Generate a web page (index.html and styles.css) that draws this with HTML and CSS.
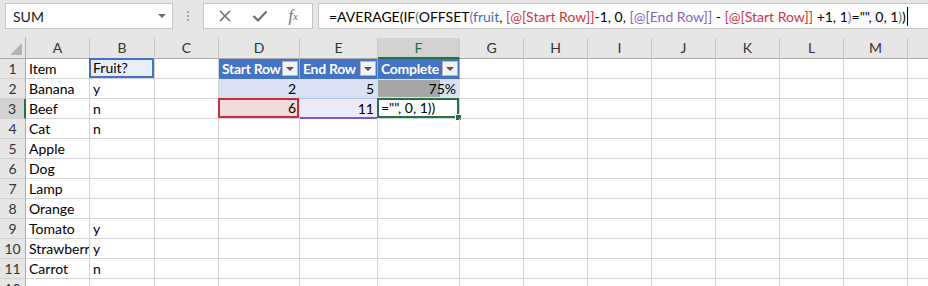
FILE: index.html
```html
<!DOCTYPE html>
<html lang="en">
  <head>
    <meta charset="UTF-8" />
    <title>Sheet</title>
    <link rel="stylesheet" href="styles.css">
  </head>
  <body>
    <div class="topbar">
      <div class="name-box">
        <span>SUM</span>
        <span class="caret"></span>
      </div>
      <div class="grip"><i></i><i></i><i></i></div>
      <div class="fx-box">
        <svg width="14" height="14" viewBox="0 0 14 14"><path d="M2 2 L12 12 M12 2 L2 12" stroke="#6e6e6e" stroke-width="1.6" fill="none"/></svg>
        <svg width="16" height="14" viewBox="0 0 16 14"><path d="M1.5 7 L6 11.5 L14.5 2.5" stroke="#6e6e6e" stroke-width="2.2" fill="none"/></svg>
        <span class="fx">f<sub>x</sub></span>
      </div>
      <div class="formula">
        <span>=AVERAGE(IF<span class="p-if">(</span>OFFSET<span class="p-off">(</span><span class="r-blue">fruit</span>, <span class="r-red">[@[Start Row]]</span>-1, 0, <span class="r-purple">[@[End Row]]</span> - <span class="r-red">[@[Start Row]]</span> +1, 1<span class="p-off">)</span>="", 0, 1<span class="p-if">)</span>)</span><span class="cursor"></span>
      </div>
    </div>

    <div class="sheet">
      <div class="row head">
        <div class="corner"><span class="tri"></span></div>
        <div>A</div><div>B</div><div>C</div><div>D</div><div>E</div><div class="col-sel">F</div>
        <div>G</div><div>H</div><div>I</div><div>J</div><div>K</div><div>L</div><div>M</div><div></div>
      </div>

      <div class="row">
        <div class="rh">1</div>
        <div>Item</div><div class="fruit-ref">Fruit?</div><div></div>
        <div class="th">Start Row<span class="drop"></span></div>
        <div class="th">End Row<span class="drop"></span></div>
        <div class="th">Complete<span class="drop"></span></div>
        <div></div><div></div><div></div><div></div><div></div><div></div><div></div><div></div>
      </div>

      <div class="row">
        <div class="rh">2</div>
        <div>Banana</div><div>y</div><div></div>
        <div class="band num">2</div>
        <div class="band num">5</div>
        <div class="band num bar-cell"><span class="bar" style="width: 76%"></span><span class="val">75%</span></div>
        <div></div><div></div><div></div><div></div><div></div><div></div><div></div><div></div>
      </div>

      <div class="row">
        <div class="rh row-sel">3</div>
        <div>Beef</div><div>n</div><div></div>
        <div class="num ref-start">6</div>
        <div class="num ref-end">11</div>
        <div class="active">="", 0, 1))<span class="handle"></span></div>
        <div></div><div></div><div></div><div></div><div></div><div></div><div></div><div></div>
      </div>

      <div class="row">
        <div class="rh">4</div>
        <div>Cat</div><div>n</div><div></div><div></div><div></div><div></div>
        <div></div><div></div><div></div><div></div><div></div><div></div><div></div><div></div>
      </div>

      <div class="row">
        <div class="rh">5</div>
        <div>Apple</div><div></div><div></div><div></div><div></div><div></div>
        <div></div><div></div><div></div><div></div><div></div><div></div><div></div><div></div>
      </div>

      <div class="row">
        <div class="rh">6</div>
        <div>Dog</div><div></div><div></div><div></div><div></div><div></div>
        <div></div><div></div><div></div><div></div><div></div><div></div><div></div><div></div>
      </div>

      <div class="row">
        <div class="rh">7</div>
        <div>Lamp</div><div></div><div></div><div></div><div></div><div></div>
        <div></div><div></div><div></div><div></div><div></div><div></div><div></div><div></div>
      </div>

      <div class="row">
        <div class="rh">8</div>
        <div>Orange</div><div></div><div></div><div></div><div></div><div></div>
        <div></div><div></div><div></div><div></div><div></div><div></div><div></div><div></div>
      </div>

      <div class="row">
        <div class="rh">9</div>
        <div>Tomato</div><div>y</div><div></div><div></div><div></div><div></div>
        <div></div><div></div><div></div><div></div><div></div><div></div><div></div><div></div>
      </div>

      <div class="row">
        <div class="rh">10</div>
        <div>Strawberry</div><div>y</div><div></div><div></div><div></div><div></div>
        <div></div><div></div><div></div><div></div><div></div><div></div><div></div><div></div>
      </div>

      <div class="row">
        <div class="rh">11</div>
        <div>Carrot</div><div>n</div><div></div><div></div><div></div><div></div>
        <div></div><div></div><div></div><div></div><div></div><div></div><div></div><div></div>
      </div>

      <div class="row">
        <div class="rh">12</div>
        <div></div><div></div><div></div><div></div><div></div><div></div>
        <div></div><div></div><div></div><div></div><div></div><div></div><div></div><div></div>
      </div>
    </div>
  </body>
</html>
```

FILE: styles.css
```css
body {
  margin: 0;
  width: 928px;
  height: 286px;
  overflow: hidden;
  background: #fff;
  font-family: "Lato", "Liberation Sans", sans-serif;
  font-size: 14px;
  color: #000;
}

/* formula bar */
.topbar {
  height: 38px;
  box-sizing: border-box;
  background: #e6e6e6;
  display: flex;
  align-items: flex-start;
  padding: 3px 0 0 5px;
}

.name-box,
.fx-box,
.formula {
  height: 26px;
  box-sizing: border-box;
  background: #fff;
  border: 1px solid #c6c6c6;
  display: flex;
  align-items: center;
}

.name-box {
  width: 168px;
  padding: 0 6px 0 7px;
  justify-content: space-between;
  color: #222;
}

.caret {
  border-left: 4px solid transparent;
  border-right: 4px solid transparent;
  border-top: 4px solid #6e6e6e;
}

.grip {
  width: 30px;
  display: flex;
  flex-direction: column;
  align-items: center;
  gap: 2px;
  padding-top: 8px;
}

.grip i {
  width: 2px;
  height: 2px;
  background: #a8a8a8;
}

.fx-box {
  width: 110px;
  justify-content: space-around;
  padding: 0 4px;
}

.fx {
  font-family: "Liberation Serif", serif;
  font-style: italic;
  font-size: 16px;
  color: #6e6e6e;
}

.fx sub {
  font-size: 11px;
  vertical-align: 1px;
}

.formula {
  flex: 1;
  margin-left: 5px;
  border-right: none;
  padding-left: 10px;
  white-space: nowrap;
}

.cursor {
  width: 1px;
  height: 19px;
  background: #000;
  margin-left: 1px;
}

.r-blue { color: #3a6dc5; }
.r-red { color: #d1343f; }
.r-purple { color: #8763c6; }
.p-off { color: #9b5fc0; }
.p-if { color: #3d8b5a; }

/* grid */
.sheet {
  width: 928px;
  overflow: hidden;
}

.row {
  display: grid;
  grid-template-columns: 26px 64px 65px 64px 81px 78px 82px 64px 64px 64px 64px 64px 64px 64px 64px;
  height: 20px;
}

.row > div {
  box-sizing: border-box;
  border-right: 1px solid #d4d4d4;
  border-bottom: 1px solid #d4d4d4;
  padding: 0 3px;
  line-height: 19px;
  white-space: nowrap;
  overflow: hidden;
  position: relative;
}

.row.head {
  height: 21px;
}

.row.head > div {
  background: #e6e6e6;
  border-right-color: #c8c8c8;
  border-bottom-color: #ababab;
  text-align: center;
  color: #333;
  line-height: 20px;
}

.row.head .corner {
  border-right-color: #ababab;
}

.tri {
  position: absolute;
  right: 3px;
  bottom: 3px;
  border-left: 12px solid transparent;
  border-bottom: 12px solid #b4b4b4;
}

.row.head .col-sel {
  background: #d2d2d2;
  color: #1e6b3f;
  border-bottom: 2px solid #217346;
}

.row > .rh {
  background: #e6e6e6;
  border-right-color: #ababab;
  border-bottom-color: #d0d0d0;
  text-align: center;
  padding: 0;
  color: #333;
}

.row > .rh.row-sel {
  background: #d2d2d2;
  border-right: 2px solid #217346;
}

.row > .fruit-ref {
  background: #e8eef8;
  box-shadow: inset 0 0 0 2px #3f72c8;
  margin: -1px 0 0 -1px;
  padding-left: 4px;
  line-height: 20px;
}

.row > .th {
  background: #4472c4;
  color: #fff;
  font-weight: bold;
  letter-spacing: -0.3px;
  border-right-color: #8ea9db;
  border-bottom-color: #4472c4;
  display: flex;
  align-items: center;
  justify-content: space-between;
  padding-right: 1px;
}

.drop {
  width: 16px;
  height: 15px;
  box-sizing: border-box;
  background: #f3f3f3;
  border: 1px solid #b7b7b7;
  display: flex;
  align-items: center;
  justify-content: center;
}

.drop::after {
  content: "";
  border-left: 4px solid transparent;
  border-right: 4px solid transparent;
  border-top: 4px solid #555;
}

.row > .band {
  background: #d9e1f2;
  border-right-color: #d9e1f2;
  border-bottom-color: #b4c6e7;
}

.num {
  text-align: right;
}

.row > .bar-cell {
  padding: 0;
}

.bar {
  position: absolute;
  left: 0;
  top: 1px;
  bottom: 1px;
  background: #a6a6a6;
}

.val {
  position: relative;
  padding-right: 3px;
}

.row > .ref-start {
  background: #f2dcdb;
  box-shadow: inset 0 0 0 2px #c0313f;
  margin: -1px 0 0 -1px;
  line-height: 20px;
}

.row > .ref-end {
  background: #eee9f6;
  border-bottom: 2px solid #7e57c2;
}

.row > .active {
  overflow: visible;
  box-shadow: inset 0 0 0 2px #217346;
  margin: -1px 0 0 -1px;
  padding-left: 4px;
  line-height: 20px;
}

.handle {
  position: absolute;
  right: -3px;
  bottom: -3px;
  width: 5px;
  height: 5px;
  background: #217346;
  border: 1px solid #fff;
}
```
